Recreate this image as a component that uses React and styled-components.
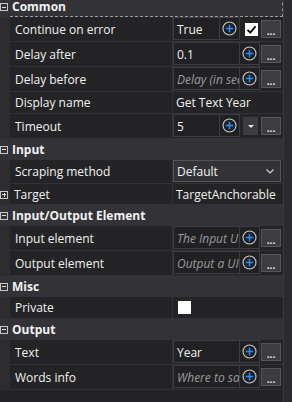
import styled, { createGlobalStyle } from "styled-components";

const GlobalStyle = createGlobalStyle`
  body {
    margin: 0;
    background: #252526;
  }
  * {
    box-sizing: border-box;
  }
`;

const Panel = styled.div`
  width: 292px;
  height: 402px;
  overflow: hidden;
  display: grid;
  grid-template-columns: 283px 9px;
  background: #242426;
  font-family: "Open Sans", "Noto Sans", sans-serif;
  font-size: 12px;
  color: #f1f1f1;
`;

const List = styled.div`
  margin-top: -3px;
`;

const ScrollTrack = styled.div`
  background: #2b2b2e;
  border-left: 1px solid #3a3a3e;
`;

const Category = styled.div`
  display: flex;
  align-items: center;
  height: ${(p) => p.$h}px;
  background: #333337;
  font-weight: 700;
`;

const Expander = styled.span`
  position: relative;
  flex: none;
  width: 8px;
  height: 8px;
  margin: 0 4px 0 0;
  border: 1px solid #c8c8c8;

  &::before,
  &::after {
    content: "";
    position: absolute;
    background: #e0e0e0;
  }
  &::before {
    left: 1px;
    right: 1px;
    top: 2.5px;
    height: 1px;
  }
  &::after {
    display: ${(p) => (p.$open ? "none" : "block")};
    top: 1px;
    bottom: 1px;
    left: 2.5px;
    width: 1px;
  }
`;

const CategoryTitle = styled.div`
  flex: 1;
  height: 100%;
  display: flex;
  align-items: center;
  margin-left: -2px;
  padding-left: 2px;
  border-bottom: 1px dashed ${(p) => (p.$focused ? "#9a9a9a" : "transparent")};
  border-right: 1px dashed ${(p) => (p.$focused ? "#9a9a9a" : "transparent")};
`;

const Row = styled.div`
  display: grid;
  grid-template-columns: 10px 163px 110px;
  height: ${(p) => p.$h}px;
`;

const Gutter = styled.div`
  background: #2d2d30;
  display: flex;
  align-items: center;
`;

const Label = styled.div`
  display: flex;
  align-items: center;
  padding-left: ${(p) => (p.$tight ? 4 : 5)}px;
  border-bottom: 1px solid #323236;
  border-right: 1px solid #323236;
  white-space: nowrap;
  overflow: hidden;
`;

const Value = styled.div`
  display: flex;
  align-items: center;
  padding-right: 2px;
  border-bottom: 1px solid #323236;
  min-width: 0;
  overflow: hidden;
`;

const Editor = styled.div`
  display: flex;
  flex: none;
  width: ${(p) => p.$w}px;
  height: 23px;
  margin-top: -1px;
  border: 1px solid #3c3c41;
  background: #212123;
`;

const Field = styled.div`
  flex: 1;
  min-width: 0;
  padding: 3px 4px 0 3px;
  white-space: nowrap;
  overflow: hidden;
  font-style: ${(p) => (p.$hint ? "italic" : "normal")};
  color: ${(p) => (p.$hint ? "#9b9b9e" : "#f1f1f1")};
`;

const PlusCell = styled.div`
  flex: none;
  width: 20px;
  display: flex;
  align-items: center;
  justify-content: center;
  border-left: 1px solid #3c3c41;
`;

const Dots = styled.div`
  flex: none;
  margin-left: auto;
  width: 20px;
  height: 18px;
  background: #3c3c41;
  border: 1px solid #55555a;
  display: flex;
  align-items: flex-end;
  justify-content: center;
  padding-bottom: 2px;
  font-size: 10px;
  line-height: 8px;
  font-weight: 700;
  color: #e8e8e8;
`;

const CheckBox = styled.div`
  flex: none;
  width: 13px;
  height: 13px;
  margin-left: ${(p) => p.$ml}px;
  background: #ffffff;
  display: flex;
  align-items: center;
  justify-content: center;
`;

const DropButton = styled.div`
  flex: none;
  width: 15px;
  height: 18px;
  margin-left: 3px;
  background: #3c3c41;
  display: flex;
  align-items: center;
  justify-content: center;

  &::after {
    content: "";
    border-left: 3px solid transparent;
    border-right: 3px solid transparent;
    border-top: 3px solid #e8e8e8;
  }
`;

const Combo = styled.div`
  flex: 1;
  height: 22px;
  margin-top: -1px;
  display: flex;
  align-items: center;
  justify-content: space-between;
  padding: 0 6px 0 3px;
  background: #333337;
  border: 1px solid #55555a;
`;

const PlainText = styled.div`
  padding-left: 3px;
  white-space: nowrap;
  overflow: hidden;
`;

function PlusIcon() {
  return (
    <svg width="15" height="15" viewBox="0 0 15 15">
      <circle cx="7.5" cy="7.5" r="6.5" fill="none" stroke="#c9c9c9" strokeWidth="1.1" />
      <path d="M7.5 3.8v7.4M3.8 7.5h7.4" stroke="#1e8fff" strokeWidth="1.5" />
    </svg>
  );
}

function CheckIcon() {
  return (
    <svg width="11" height="11" viewBox="0 0 11 11">
      <path d="M1.5 5.8l2.8 2.8L9.6 2.2" fill="none" stroke="#000" strokeWidth="1.8" />
    </svg>
  );
}

function Chevron() {
  return (
    <svg width="8" height="5" viewBox="0 0 8 5">
      <path d="M0.5 0.5l3.5 3.5 3.5-3.5" fill="none" stroke="#d8d8d8" strokeWidth="1.1" />
    </svg>
  );
}

function CategoryRow({ title, focused, h = 21 }) {
  return (
    <Category $h={h}>
      <Expander $open />
      <CategoryTitle $focused={focused}>{title}</CategoryTitle>
    </Category>
  );
}

function PropRow({ label, h = 25, expandable, children }) {
  return (
    <Row $h={h}>
      <Gutter>{expandable && <Expander />}</Gutter>
      <Label $tight={expandable}>{label}</Label>
      <Value>{children}</Value>
    </Row>
  );
}

function TextEditor({ w, text, hint }) {
  return (
    <Editor $w={w}>
      <Field $hint={hint}>{text}</Field>
      <PlusCell>
        <PlusIcon />
      </PlusCell>
    </Editor>
  );
}

export default function App() {
  return (
    <>
      <GlobalStyle />
      <Panel>
        <List>
          <CategoryRow title="Common" focused h={20} />
          <PropRow label="Continue on error">
            <TextEditor w={67} text="True" />
            <CheckBox $ml={5}>
              <CheckIcon />
            </CheckBox>
            <Dots>...</Dots>
          </PropRow>
          <PropRow label="Delay after">
            <TextEditor w={87} text="0.1" />
            <Dots>...</Dots>
          </PropRow>
          <PropRow label="Delay before">
            <TextEditor w={87} text="Delay (in seconds)" hint />
            <Dots>...</Dots>
          </PropRow>
          <PropRow label="Display name" h={22}>
            <PlainText>Get Text Year</PlainText>
          </PropRow>
          <PropRow label="Timeout">
            <TextEditor w={67} text="5" />
            <DropButton />
            <Dots>...</Dots>
          </PropRow>

          <CategoryRow title="Input" />
          <PropRow label="Scraping method" h={24}>
            <Combo>
              <span>Default</span>
              <Chevron />
            </Combo>
          </PropRow>
          <PropRow label="Target" h={21} expandable>
            <PlainText>TargetAnchorable</PlainText>
          </PropRow>

          <CategoryRow title="Input/Output Element" />
          <PropRow label="Input element">
            <TextEditor w={87} text="The Input UI Element" hint />
            <Dots>...</Dots>
          </PropRow>
          <PropRow label="Output element">
            <TextEditor w={87} text="Output a UI Element" hint />
            <Dots>...</Dots>
          </PropRow>

          <CategoryRow title="Misc" />
          <PropRow label="Private" h={22}>
            <CheckBox $ml={5} />
          </PropRow>

          <CategoryRow title="Output" />
          <PropRow label="Text">
            <TextEditor w={87} text="Year" />
            <Dots>...</Dots>
          </PropRow>
          <PropRow label="Words info">
            <TextEditor w={87} text="Where to save" hint />
            <Dots>...</Dots>
          </PropRow>
        </List>
        <ScrollTrack />
      </Panel>
    </>
  );
}
